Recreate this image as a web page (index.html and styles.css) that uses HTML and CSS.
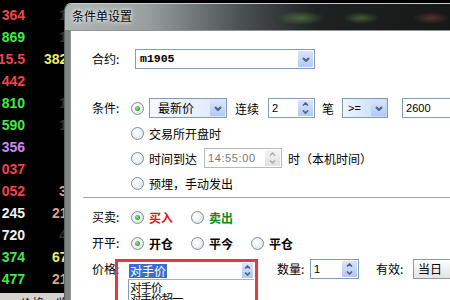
FILE: index.html
```html
<!doctype html>
<html lang="zh-CN">
  <head>
    <meta charset="UTF-8" />
    <title>条件单设置</title>
    <link rel="stylesheet" href="styles.css">
  </head>
  <body>
    <div class="quotes">
      <div class="q"><b class="last red">364</b><i class="vol edge dim">1</i></div>
      <div class="q"><b class="last green">869</b><i class="vol edge dim">1</i></div>
      <div class="q"><b class="last red">15.5</b><i class="vol yellow">382</i></div>
      <div class="q"><b class="last red">442</b></div>
      <div class="q"><b class="last green">810</b><i class="vol edge dim">1</i></div>
      <div class="q"><b class="last green">590</b><i class="vol edge dim">1</i></div>
      <div class="q"><b class="last purple">356</b></div>
      <div class="q"><b class="last red">037</b></div>
      <div class="q"><b class="last red">052</b><i class="vol edge brown">3</i></div>
      <div class="q"><b class="last white">245</b><i class="vol far brown">21</i></div>
      <div class="q"><b class="last white">720</b><i class="vol edge dim">4</i></div>
      <div class="q"><b class="last green">374</b><i class="vol far yellow">67</i></div>
      <div class="q"><b class="last green">477</b><i class="vol far brown">21</i></div>
      <div class="tab">价格一览表</div>
    </div>

    <div class="dialog">
      <div class="titlebar">条件单设置</div>
      <div class="frame">
        <div class="client">
          <div class="row">
            <span class="label wide">合约:</span>
            <div class="combo contract">
              <span class="val mono">m1905</span>
              <span class="drop"><svg width="8" height="5" viewBox="0 0 8 5"><path d="M1 1l3 3 3-3" fill="none" stroke="#4d6185" stroke-width="2"/></svg></span>
            </div>
          </div>

          <div class="conds">
            <div class="row">
              <span class="label">条件:</span>
              <span class="radio on"></span>
              <div class="combo tint src">
                <span class="val">最新价</span>
                <span class="drop"><svg width="8" height="5" viewBox="0 0 8 5"><path d="M1 1l3 3 3-3" fill="none" stroke="#4d6185" stroke-width="2"/></svg></span>
              </div>
              <span class="txt lianxu">连续</span>
              <div class="spin count">
                <span class="val num">2</span>
                <span class="arrows">
                  <span><svg width="7" height="4" viewBox="0 0 7 4"><path d="M1 3.5l2.5-2.5 2.5 2.5" fill="none" stroke="#4d6185" stroke-width="1.6"/></svg></span>
                  <span><svg width="7" height="4" viewBox="0 0 7 4"><path d="M1 .5l2.5 2.5 2.5-2.5" fill="none" stroke="#4d6185" stroke-width="1.6"/></svg></span>
                </span>
              </div>
              <span class="txt bi">笔</span>
              <div class="combo blue op">
                <span class="val num">&gt;=</span>
                <span class="drop"><svg width="8" height="5" viewBox="0 0 8 5"><path d="M1 1l3 3 3-3" fill="none" stroke="#4d6185" stroke-width="2"/></svg></span>
              </div>
              <div class="edit target"><span class="val num">2600</span></div>
            </div>
            <div class="row indent">
              <span class="radio"></span>
              <span>交易所开盘时</span>
            </div>
            <div class="row indent">
              <span class="radio"></span>
              <span>时间到达</span>
              <div class="spin off time">
                <span class="val num">14:55:00</span>
                <span class="arrows">
                  <span><svg width="7" height="4" viewBox="0 0 7 4"><path d="M1 3.5l2.5-2.5 2.5 2.5" fill="none" stroke="#a8a8a8" stroke-width="1.4"/></svg></span>
                  <span><svg width="7" height="4" viewBox="0 0 7 4"><path d="M1 .5l2.5 2.5 2.5-2.5" fill="none" stroke="#a8a8a8" stroke-width="1.4"/></svg></span>
                </span>
              </div>
              <span class="txt clock">时（本机时间）</span>
            </div>
            <div class="row indent">
              <span class="radio"></span>
              <span>预埋，手动发出</span>
            </div>
          </div>

          <div class="sep"></div>

          <div class="row side">
            <span class="label">买卖:</span>
            <span class="opt"><span class="radio on"></span><b class="buy">买入</b></span>
            <span class="opt"><span class="radio"></span><b class="sell">卖出</b></span>
          </div>
          <div class="row offset">
            <span class="label">开平:</span>
            <span class="opt"><span class="radio on"></span><b>开仓</b></span>
            <span class="opt"><span class="radio"></span><b>平今</b></span>
            <span class="opt"><span class="radio"></span><b>平仓</b></span>
          </div>

          <div class="row price">
            <span class="label short">价格:</span>
            <div class="mark">
              <div class="pcombo">
                <span class="hl">对手价</span>
                <span class="arrows small">
                  <span><svg width="7" height="4" viewBox="0 0 7 4"><path d="M1 3.5l2.5-2.5 2.5 2.5" fill="none" stroke="#4d6185" stroke-width="1.6"/></svg></span>
                  <span><svg width="7" height="4" viewBox="0 0 7 4"><path d="M1 .5l2.5 2.5 2.5-2.5" fill="none" stroke="#4d6185" stroke-width="1.6"/></svg></span>
                </span>
              </div>
              <div class="plist">
                <div>对手价</div>
                <div>对手价超一</div>
              </div>
            </div>
            <span class="label qty">数量:</span>
            <div class="spin lots">
              <span class="val num">1</span>
              <span class="arrows">
                <span><svg width="7" height="4" viewBox="0 0 7 4"><path d="M1 3.5l2.5-2.5 2.5 2.5" fill="none" stroke="#4d6185" stroke-width="1.6"/></svg></span>
                <span><svg width="7" height="4" viewBox="0 0 7 4"><path d="M1 .5l2.5 2.5 2.5-2.5" fill="none" stroke="#4d6185" stroke-width="1.6"/></svg></span>
              </span>
            </div>
            <span class="label valid">有效:</span>
            <div class="combo grey day"><span class="val">当日</span></div>
          </div>
        </div>
      </div>
    </div>
  </body>
</html>
```

FILE: styles.css
```css
html,
body {
  margin: 0;
  width: 450px;
  height: 300px;
  overflow: hidden;
}
body {
  display: flex;
  background: #000;
  font-family: "Noto Sans CJK SC", sans-serif;
}

/* quote board behind the dialog */
.quotes {
  width: 64px;
  flex: none;
  padding-top: 4px;
  overflow: hidden;
  display: flex;
  flex-direction: column;
}
.q {
  height: 22px;
  flex: none;
  display: flex;
  align-items: center;
  font: bold 14px "Liberation Sans", Arial, sans-serif;
  white-space: nowrap;
}
.q i {
  font-style: normal;
}
.last {
  width: 25px;
  flex: none;
  display: flex;
  justify-content: flex-end;
}
.vol {
  margin-left: 19px;
}
.vol.far {
  margin-left: 27px;
}
.vol.edge {
  margin-left: 34px;
}
.red { color: #f2434b; }
.green { color: #46e848; }
.white { color: #f2f2f2; }
.purple { color: #c88af0; }
.yellow { color: #ecec6a; }
.brown { color: #d8a486; }
.dim { color: #33332a; }
.tab {
  margin-top: 3px;
  height: 12px;
  flex: none;
  background: #d6d3cc;
  color: #111;
  font-size: 12px;
  line-height: 20px;
  padding-left: 20px;
  white-space: nowrap;
  overflow: hidden;
}

/* dialog window */
.dialog {
  flex: 1;
  margin-top: 3px;
  display: flex;
  flex-direction: column;
  border-radius: 7px 0 0 0;
  border-top: 1px solid #c9cece;
  border-left: 1px solid #5c6262;
  overflow: hidden;
}
.titlebar {
  height: 26px;
  flex: none;
  padding-left: 7px;
  font-size: 12px;
  line-height: 24px;
  color: #000;
  text-shadow: 0 0 6px #fff, 0 0 3px #fff;
  background:
    radial-gradient(ellipse 24px 7px at 236px 14px, rgba(100, 150, 80, 0.55), transparent),
    radial-gradient(ellipse 18px 6px at 296px 14px, rgba(100, 150, 80, 0.5), transparent),
    radial-gradient(ellipse 18px 6px at 366px 14px, rgba(150, 70, 80, 0.5), transparent),
    linear-gradient(90deg, #b0b6b6 0, #9aa0a0 80px, #4c5151 175px, #1f2222 250px, #161818 100%);
}
.frame {
  flex: 1;
  display: flex;
  padding-left: 5px;
  background: linear-gradient(90deg, #7f8585, #c4c9c9);
}
.client {
  flex: 1;
  background: #fff;
  border-left: 1px solid #8d9393;
  border-top: 1px solid #8d9393;
  padding: 18px 0 0 21px;
  font-size: 12px;
  color: #000;
  overflow: hidden;
  white-space: nowrap;
}

.row {
  display: flex;
  align-items: center;
  height: 20px;
}
.row > * {
  flex: none;
}
.label {
  width: 39px;
  line-height: 20px;
}
.label.wide {
  width: 43px;
}
.label.short {
  width: 23px;
}
.label.qty {
  margin-left: 19px;
  width: 33px;
}
.label.valid {
  margin-left: 17px;
  width: 37px;
}
.indent {
  padding-left: 39px;
}
.conds {
  margin-top: 29px;
  display: flex;
  flex-direction: column;
  gap: 5px;
}
.sep {
  margin: 4px 0 0 -9px;
  border-top: 1px solid #a3a3a3;
}
.side {
  margin-top: 9px;
}
.offset {
  margin-top: 6px;
}
.price {
  margin-top: 6px;
  align-items: flex-start;
  height: auto;
}

/* radio buttons */
.radio {
  width: 13px;
  height: 13px;
  box-sizing: border-box;
  margin-right: 5px;
  border: 1px solid #7d8e9e;
  border-radius: 50%;
  background: radial-gradient(circle at 40% 40%, #fff 0, #f0f2f4 45%, #cfd5da 100%);
  position: relative;
}
.radio.on::after {
  content: "";
  position: absolute;
  left: 3px;
  top: 3px;
  width: 5px;
  height: 5px;
  border-radius: 50%;
  background: radial-gradient(circle at 40% 40%, #9be39b 0, #2f9e2f 70%);
}
.opt {
  width: 60px;
  display: flex;
  align-items: center;
}
.buy { color: #e0151b; }
.sell { color: #0f8a0f; }

/* edit controls */
.combo,
.spin,
.edit {
  display: flex;
  height: 20px;
  box-sizing: border-box;
  border: 1px solid #7f9db9;
  background: #fff;
}
.val {
  flex: 1;
  padding-left: 3px;
  line-height: 18px;
  overflow: hidden;
}
.mono {
  font: bold 11.5px "Liberation Mono", monospace;
  line-height: 18px;
}
.num {
  font-family: "Liberation Sans", Arial, sans-serif;
  font-size: 11px;
}
.drop {
  width: 15px;
  margin: 1px;
  display: flex;
  align-items: center;
  justify-content: center;
  background: linear-gradient(#dae4fc, #b3c7f4);
  border-radius: 1px;
}
.arrows {
  width: 15px;
  margin: 1px;
  display: flex;
  flex-direction: column;
  background: linear-gradient(#dae4fc, #b3c7f4);
}
.arrows span {
  flex: 1;
  display: flex;
  align-items: center;
  justify-content: center;
}
.contract {
  width: 180px;
}
.contract .val {
  padding-left: 4px;
}
.src {
  width: 78px;
}
.tint {
  background: linear-gradient(90deg, #f4f7ff, #dfe8fb);
}
.tint .val {
  padding-left: 8px;
}
.lianxu {
  margin: 0 9px 0 8px;
}
.count {
  width: 47px;
}
.bi {
  margin: 0 8px 0 7px;
}
.op {
  width: 46px;
}
.blue {
  background: linear-gradient(90deg, #eef4fe, #c3d7f8);
}
.blue .val {
  padding-left: 5px;
}
.target {
  width: 60px;
  margin-left: 14px;
}
.time {
  width: 78px;
  margin-left: 7px;
  border-color: #b4b9be;
}
.time .val {
  color: #777;
  letter-spacing: 0.6px;
}
.off .arrows {
  background: linear-gradient(#f4f4f4, #e0e0e0);
}
.clock {
  margin-left: 6px;
}

/* price picker, highlighted with a red frame */
.mark {
  width: 143px;
  height: 50px;
  box-sizing: border-box;
  border: 3px solid #e6393f;
  padding: 0 1px 0 10px;
}
.pcombo {
  height: 17px;
  display: flex;
  align-items: center;
}
.hl {
  flex: none;
  background: #3a6fcc;
  color: #fff;
  line-height: 14px;
  padding: 0 1px;
  margin-left: 1px;
}
.pcombo .arrows {
  margin-left: auto;
  width: 11px;
  height: 15px;
}
.plist {
  border-left: 1px solid #7f9db9;
  border-top: 1px solid #a8b0b8;
  font-size: 11.5px;
  line-height: 11px;
  padding: 2px 0 0 1px;
  letter-spacing: -1px;
}
.lots {
  width: 49px;
}
.day {
  width: 60px;
  border-color: #8c9aa8;
  background: linear-gradient(#fdfdfd, #e3e3e3);
}
.day .val {
  padding-left: 4px;
}
```
